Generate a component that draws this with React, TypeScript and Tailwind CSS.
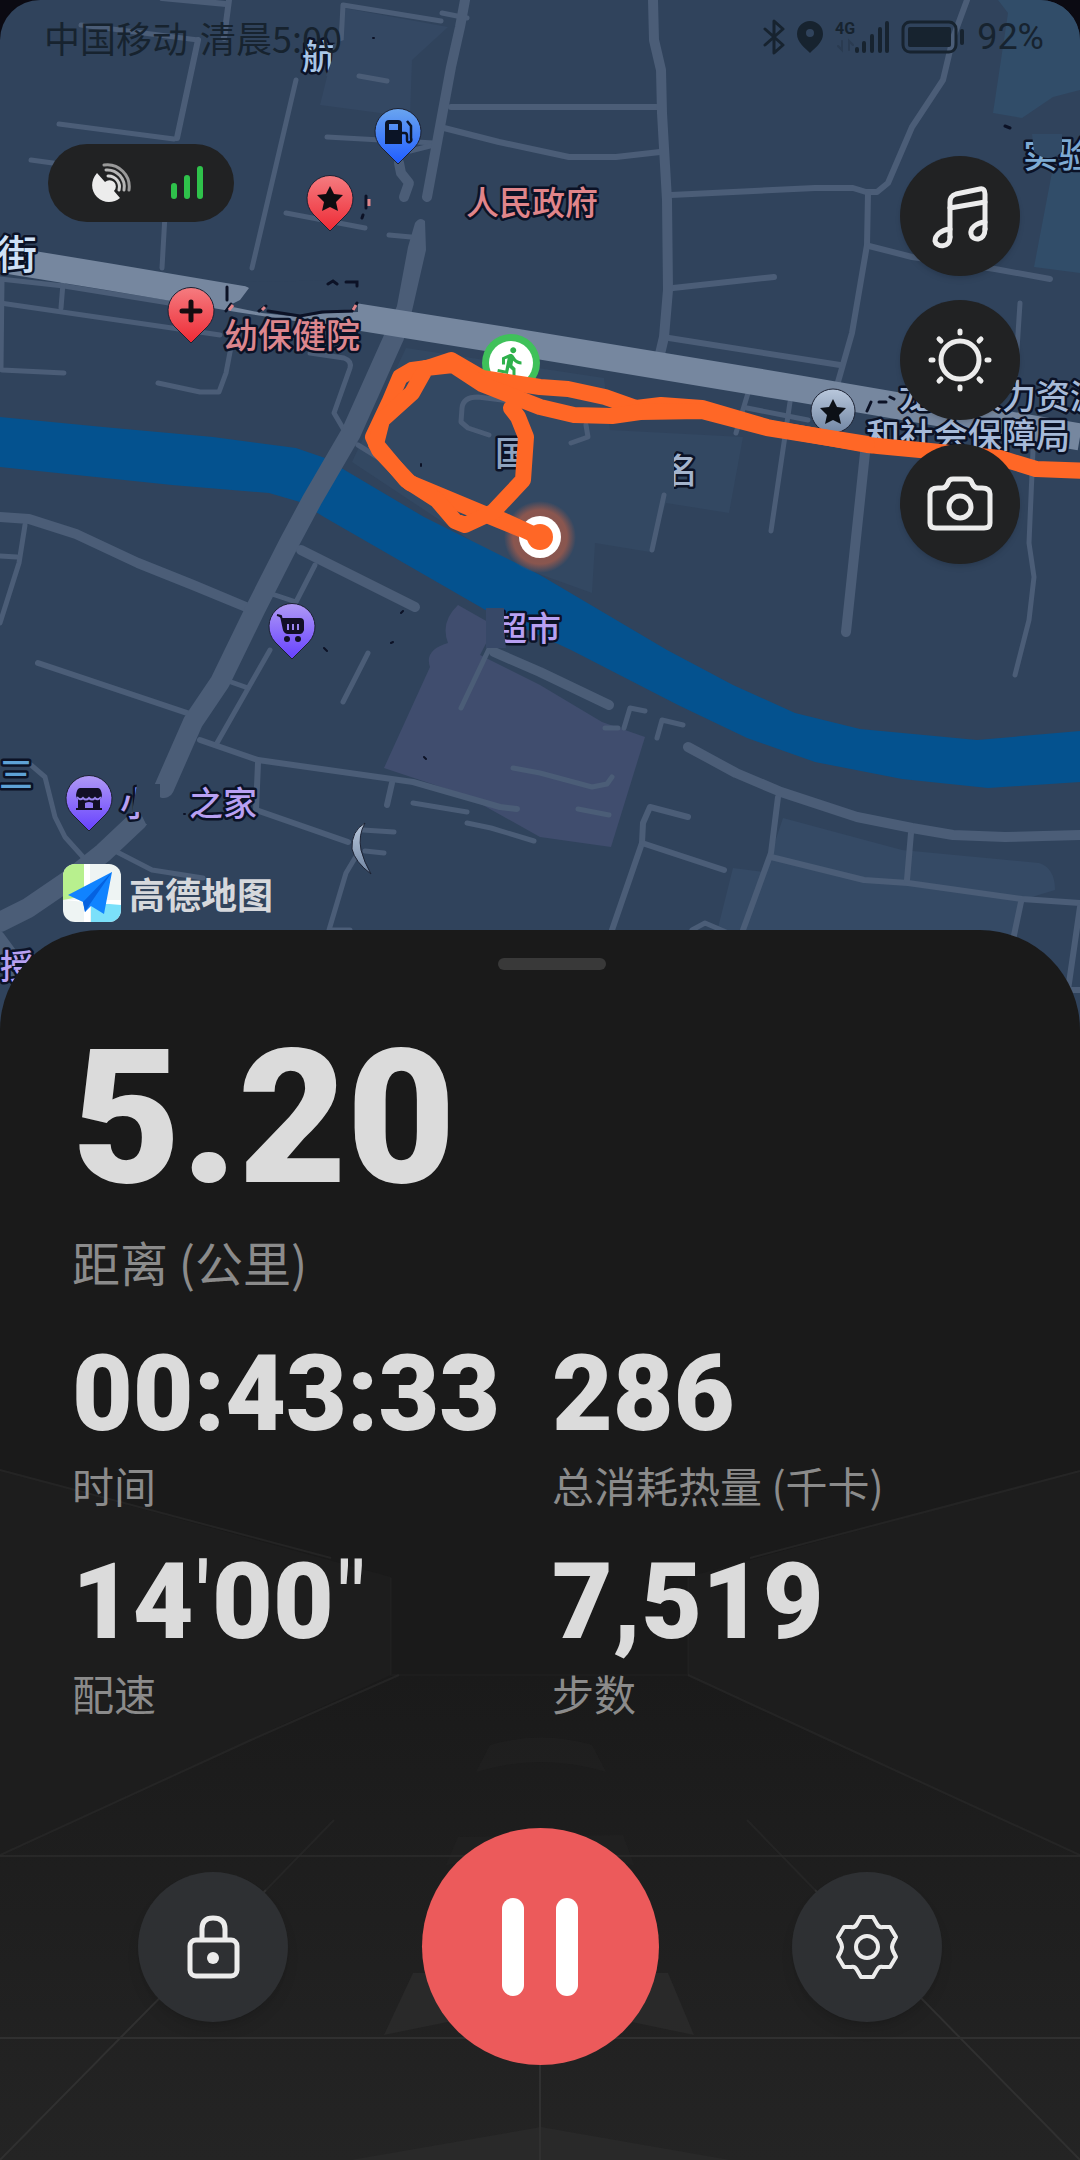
import type { ReactNode } from "react";
import { MdDirectionsRun, MdLocalGasStation, MdStore } from "react-icons/md";
import { FaShoppingCart } from "react-icons/fa";

const stats = [
  { label: "时间", value: "00:43:33" },
  { label: "总消耗热量 (千卡)", value: "286" },
  { label: "配速", value: "14'00\"" },
  { label: "步数", value: "7,519" },
];

// width -> list of polylines drawn with that stroke
const roads: { width: number; lines: string[] }[] = [
  {
    width: 5,
    lines: [
      "M81 25 L198 40", "M59 124 L174 139", "M31 160 L60 164", "M165 215 L162 268", "M296 80 L252 268",
      "M327 137 L434 143", "M286 213 L365 228", "M389 235 L411 237", "M0 279 L64 286 L169 303",
      "M0 303 L220 335", "M63 283 L61 308", "M2 280 L1 368 M2 370 L64 373",
      "M158 383 L200 392 H219 L226 373 L231 347", "M310 353 L344 358 Q352 361 350 368 L334 413 L344 430",
      "M358 445 L379 458", "M510 401 L478 397 Q463 397 462 408 L461 422 L468 428 L489 435",
      "M586 425 L588 437 L571 443", "M748 393 L736 433", "M747 408 L808 420", "M790 402 L771 531",
      "M1033 450 L1029 543 L1034 577 L1029 620 L1015 675", "M664 495 L652 550", "M1020 303 L1015 380",
      "M25 525 L19 563 L0 623", "M0 556 L17 557", "M315 565 L296 602 L275 595", "M270 650 L217 743",
      "M231 682 L248 688", "M368 653 L343 702", "M498 630 L461 708", "M413 803 L467 812", "M467 823 L491 828 L534 841",
      "M363 830 L394 832", "M365 851 L384 853", "M355 858 L346 873 L329 930 H350",
      "M31 765 L45 777 L55 817 L65 837 L83 857", "M117 852 L152 870 L203 878", "M513 768 L540 773 L592 787 L607 784 L612 777",
      "M605 728 H618", "M624 728 L630 708 L645 711", "M657 738 L662 720 L683 725", "M578 809 L609 815",
      "M692 930 L705 923 L726 932", "M341 43 L343 5 L441 21", "M442 13 L467 18", "M410 151 L434 145", "M359 76 L387 81",
    ],
  },
  {
    width: 6,
    lines: [
      "M162 -2 L226 4", "M229 0 L224 38", "M198 40 L177 138", "M451 107 H657", "M444 128 L499 142 L569 157 H616 L660 152",
      "M671 195 L815 188 H853 L866 192 H877 L888 183 L912 127 L943 80 L953 38 L967 0",
      "M868 193 L867 245 L852 333 L838 382", "M869 246 L912 257 L995 269 L1050 279", "M673 288 L774 277",
      "M669 338 L840 365", "M38 663 L193 715", "M200 740 L258 760 L413 782 L500 807 L517 809",
      "M258 763 L256 810 L348 842", "M392 783 L387 805",
      "M778 797 L771 853 L743 930", "M771 857 L864 880 L908 883 L1022 899 L1080 903", "M911 833 L907 880",
      "M1021 902 L1013 940", "M1080 907 L1068 990 L1080 990", "M688 817 L650 807 L643 823 L642 843 L612 930", "M642 843 L724 870",
    ],
  },
  {
    width: 10,
    lines: [
      "M653 0 L654 40 L661 70 L662 113 L667 200 L668 290 L664 337 L660 354", "M465 0 L460 27 L451 67 L427 197",
      "M399 163 L401 173 L409 183 L404 197", "M0 517 L29 519 L76 534 L138 563 L193 585 L246 607",
      "M301 550 L415 607", "M494 652 L540 672 L609 705", "M688 747 L736 773 L781 792 L857 817 L912 828 L953 835 L1005 837 L1080 835",
      "M865 453 L846 632",
    ],
  },
  {
    width: 20,
    lines: [
      "M399 322 L394 337 L351 433 L312 500 L289 543 L255 610 L220 682 L193 722 L164 788",
      "M138 820 L103 853 L69 880 L28 908 L0 922",
      "M-4 940 L40 1000",
    ],
  },
];

const labels = [
  { text: "街", x: -3, y: 269, size: 40, fill: "#cfe1f6" },
  { text: "航", x: 302, y: 69, size: 34, fill: "#a9c6e6" },
  { text: "人民政府", x: 466, y: 215, size: 33, fill: "#e0858a" },
  { text: "幼保健院", x: 224, y: 348, size: 34, fill: "#dc868d" },
  { text: "国", x: 495, y: 466, size: 34, fill: "#8ea3bf" },
  { text: "名", x: 664, y: 483, size: 34, fill: "#a3b3cc" },
  { text: "龙", x: 899, y: 409, size: 34, fill: "#a6bad8" },
  { text: "人力资源", x: 968, y: 409, size: 34, fill: "#a6bad8" },
  { text: "和社会保障局", x: 866, y: 448, size: 34, fill: "#a6bad8" },
  { text: "超市", x: 493, y: 641, size: 34, fill: "#b8a0f2" },
  { text: "小", x: 120, y: 816, size: 34, fill: "#b8a0f2" },
  { text: "之家", x: 189, y: 816, size: 34, fill: "#b8a0f2" },
  { text: "三", x: -1, y: 787, size: 34, fill: "#5ea2d6" },
  { text: "授", x: 0, y: 979, size: 34, fill: "#b8a0f2" },
  { text: "实验", x: 1023, y: 168, size: 35, fill: "#7daad2" },
];

const STAR = "M0 -13 L4 -5 L13 -4 L6 3 L8 12 L0 8 L-8 12 L-6 3 L-13 -4 L-4 -5 Z";

const Pin = ({ x, y, fill, children }: { x: number; y: number; fill: string; children: ReactNode }) => (
  <g transform={`translate(${x} ${y})`}>
    <path d="M0 32 L-17 15 A23 23 0 1 1 17 15 Z" fill={fill} stroke="#1c2233" strokeWidth="1" strokeLinejoin="round" />
    {children}
  </g>
);

const Gradient = ({ id, from, to }: { id: string; from: string; to: string }) => (
  <linearGradient id={id} x1="0" y1="0" x2="0" y2="1">
    <stop offset="0" stopColor={from} />
    <stop offset="1" stopColor={to} />
  </linearGradient>
);

const RouteMap = () => (
  <svg
    viewBox="0 0 1080 1040"
    preserveAspectRatio="xMidYMin slice"
    className="absolute inset-x-0 top-0 h-[1040px] w-full rounded-t-[40px] bg-[#30435c]"
    role="img"
    aria-label="高德地图"
  >
    <defs>
      <Gradient id="pin-red" from="#f57c80" to="#ee2a35" />
      <Gradient id="pin-blue" from="#6aa5f0" to="#1f5cff" />
      <Gradient id="pin-purple" from="#b09af5" to="#6640ff" />
      <Gradient id="pin-gray" from="#b9c8dc" to="#7186a3" />
      <radialGradient id="glow">
        <stop offset="0.75" stopColor="#e0643c" stopOpacity="0.5" />
        <stop offset="1" stopColor="#e0643c" stopOpacity="0" />
      </radialGradient>
    </defs>

    {/* land blocks */}
    <path d="M344 8 L448 27 L412 60 L410 117 L320 105 Z" fill="#344863" />
    <path d="M406 348 L604 378 L610 430 L743 437 L729 513 L666 503 L650 552 L595 543 L592 593 L500 560 L352 462 Z" fill="#334862" />
    <path d="M783 818 L902 850 L1039 863 Q1055 868 1055 890 L1022 900 L1012 940 H715 L733 868 L765 872 Z" fill="#354a65" />
    <path d="M998 0 L1008 13 L993 113 L1022 118 L1053 97 L1080 90 V0 Z M1053 167 H1080 V273 L1034 267 Z" fill="#314d69" />
    <path
      d="M458 605 Q440 622 448 643 Q424 650 430 667 L384 768 L465 795 L540 837 L611 847 L645 737 L602 722 L540 685 L480 655 L495 626 Z"
      fill="#404d6e"
    />

    <path
      d="M0 417 L103 427 L213 437 L296 448 L325 458 L348 472 L424 517 L540 575 L667 650 L733 685 L795 713 L860 729 L977 740 L1080 731 V782 L988 788 L902 779 L815 762 L747 738 L678 705 L571 650 L489 612 L324 517 L300 502 L269 493 L172 485 L0 467 Z"
      fill="#04528f"
    />

    {roads.map((group) => (
      <g key={group.width} fill="none" stroke="#4b5d77" strokeWidth={group.width} strokeLinejoin="round" strokeLinecap="round">
        {group.lines.map((d) => (
          <path key={d} d={d} />
        ))}
      </g>
    ))}
    <path d="M415 223 Q420 216 425 221 L426 250 L409 324 H389 L397 306 L408 247 Z" fill="#4b5d77" />

    <path d="M0 259 L110 277 L240 299 L358 317 L540 346 L800 389 L1080 437" fill="none" stroke="#76879f" strokeWidth="27" />
    <path d="M238 282 L249 288 L240 300 L228 306 L262 313 L300 317 L325 313 L358 312 V280 Z" fill="#30435c" />
    <g stroke="#0c1226" strokeWidth="3" fill="none" strokeLinecap="round">
      <path d="M227 287 V300 M226 311 L231 304 M259 311 L266 306 M328 284 L333 281 L337 284 M346 282 H357 V286 M268 311 L300 316 L322 312 L352 311 L357 303" />
      <path d="M366 196 V208 M363 215 L362 218 M1005 126 L1010 128 M867 411 L871 402 M879 402 H886 M890 397 L894 399" />
      <path d="M324 648 L327 651 M391 643 L393 642 M401 613 L403 611 M424 757 L426 759 M421 464 V466 M373 38 H374 M184 814 H185" strokeWidth="2" />
    </g>
    <path d="M229 310 L233 305 M262 310 L265 307 M369 199 V206 M353 310 L356 305" stroke="#e0858a" strokeWidth="3" />

    {/* start marker sits below the track */}
    <path d="M486 378 L508 403 L536 378 Z" fill="#3fc15a" />
    <circle cx="511" cy="363" r="29" fill="#3fc15a" />
    <circle cx="511" cy="363" r="22" fill="#fff" />
    <MdDirectionsRun x={493} y={345} size={36} color="#2fb14c" />

    <circle cx="833" cy="411" r="22" fill="url(#pin-gray)" stroke="#1c2233" />
    <path d={STAR} transform="translate(833 412)" fill="#0c1016" />

    <g
      fontFamily="'Noto Sans CJK SC', sans-serif"
      fontWeight="500"
      stroke="#0b1226"
      strokeWidth="5"
      strokeLinejoin="round"
      paintOrder="stroke"
    >
      {labels.map((l) => (
        <text key={l.text} x={l.x} y={l.y} fontSize={l.size} fill={l.fill}>
          {l.text}
        </text>
      ))}
    </g>

    {/* worn-off parts of labels */}
    <path d="M333 44 L344 40 V76 H326 L332 60 Z" fill="#344863" />
    <path d="M660 450 H674 V490 H660 Z" fill="#334862" />
    <path d="M486 608 H504 V632 L506 648 H486 Z" fill="#374867" />
    <path d="M137 784 H160 V824 H146 L140 812 L132 812 Z" fill="#30435c" />
    <path d="M1032 134 H1062 V152 Q1048 164 1034 152 Z" fill="#314a66" />

    <g fill="none" stroke="#ff6726" strokeWidth="16" strokeLinejoin="round" strokeLinecap="round">
      <path d="M540 537 L499 520 L482 513 L410 483 L379 450 L373 437 L389 403 L400 377 L412 370 L427 368 L451 360 L482 378 L540 387 L568 389 L605 397 L636 408 L661 405 L702 408 L767 427 L867 445 L920 450 L1000 458 L1036 469 L1090 471" />
      <path d="M511 408 L518 417 L526 437 L523 480 L493 512 L465 525 L455 521 L437 500 L406 480 L376 444 L382 420 L412 393 L426 368 L453 365 L482 384 L517 398 L540 407 L574 415 L612 416 L640 412 L702 411 L767 428 L867 444" />
    </g>
    <circle cx="540" cy="537" r="36" fill="url(#glow)" />
    <circle cx="540" cy="537" r="21" fill="#fff" />
    <path d="M500 519 L535 535" stroke="#ff6726" strokeWidth="16" />
    <circle cx="540" cy="537" r="13" fill="#ff6726" />

    <Pin x={398} y={132} fill="url(#pin-blue)">
      <path
        d="M-13 12 V-8 Q-13 -12 -9 -12 H0 Q4 -12 4 -8 V12 Z M-9 -8 V-2 H0 V-8 Z"
        fill="#0b1426"
        fillRule="evenodd"
      />
      <path d="M4 1 H7 Q9 1 9 4 V8 Q9 11 12 10 Q14 9 13 6 V-6 L9 -11" fill="none" stroke="#0b1426" strokeWidth="2.5" />
    </Pin>
    <Pin x={330} y={199} fill="url(#pin-red)">
      <path d={STAR} fill="#100c10" />
    </Pin>
    <Pin x={191} y={311} fill="url(#pin-red)">
      <path d="M0 -9 V9 M-9 0 H9" stroke="#150c10" strokeWidth="5" strokeLinecap="round" />
    </Pin>
    <Pin x={292} y={627} fill="url(#pin-purple)">
      <path d="M-15 -12 L-11 -11 L-8 3 Q-7 6 -4 6 H8 Q10 6 11 3 V-5 Q11 -8 8 -8 H-10" fill="#120f26" stroke="#120f26" strokeWidth="2" strokeLinejoin="round" />
      <path d="M-4 -3 V3 M1 -3 V3 M6 -3 V3" stroke="#9a85f0" strokeWidth="2" />
      <circle cx="-5" cy="12" r="3" fill="#120f26" />
      <circle cx="6" cy="12" r="3" fill="#120f26" />
    </Pin>
    <Pin x={89} y={799} fill="url(#pin-purple)">
      <path d="M-9 -11 H9 Q12 -11 13 -4 Q13 -1 11 0 V9 H13 V11 H-13 V9 H-11 V0 Q-13 -1 -13 -4 Q-12 -11 -9 -11 Z" fill="#120f26" />
      <path d="M-12 -2 Q-9 2 -6 -1 Q-3 2 0 -1 Q3 2 6 -1 Q9 2 12 -2" fill="none" stroke="#9a85f0" strokeWidth="2" />
      <path d="M-4 9 V4 Q0 2 4 4 V9 Z" fill="#8f78f4" />
    </Pin>

    <path d="M365 823 Q351 831 352 849 Q355 862 371 874 Q364 862 361 850 Q358 835 365 823 Z" fill="url(#pin-gray)" stroke="#1c2233" />
  </svg>
);

const StatusBar = () => (
  <header className="flex h-[74px] items-center justify-between pl-11 pr-9 text-[36px] leading-none text-[#17232f]">
    <div className="flex gap-3">
      <span>中国移动</span>
      <span>清晨5:00</span>
    </div>
    <div className="flex items-center gap-3">
      <svg viewBox="0 0 22 36" className="h-9 w-[22px]" fill="none" stroke="currentColor" strokeWidth="3" strokeLinejoin="round" strokeLinecap="round">
        <path d="M2 10 L20 26 L11 34 V2 L20 10 L2 26" />
      </svg>
      <svg viewBox="0 0 26 32" className="h-8 w-[26px]" fill="currentColor" fillRule="evenodd">
        <path d="M13 0 A13 13 0 0 0 0 13 C0 21 8 27 13 32 C18 27 26 21 26 13 A13 13 0 0 0 13 0 Z M13 8 A4 4 0 1 1 13 16 A4 4 0 1 1 13 8 Z" />
      </svg>
      <div className="flex h-8">
        <span className="font-[Roboto] text-base font-bold leading-none">4G</span>
        <svg viewBox="0 0 34 32" className="h-8 w-[34px] overflow-visible" stroke="currentColor" strokeWidth="4" strokeLinecap="round">
          <path d="M2 28 V30 M9 22 V30 M17 15 V30 M25 8 V30 M32 2 V30" />
          <path d="M-13 20 V29 L-17 25 M-6 29 V20 L-2 24" fill="none" opacity="0.25" strokeWidth="2" />
        </svg>
      </div>
      <svg viewBox="0 0 64 34" className="h-[34px] w-16" fill="none" stroke="currentColor" strokeWidth="3">
        <rect x="2" y="2" width="53" height="30" rx="7" />
        <rect x="7" y="7" width="43" height="20" rx="2" fill="currentColor" stroke="none" />
        <path d="M61 11 V23" strokeWidth="4" strokeLinecap="round" />
      </svg>
      <span className="font-[Roboto]">92%</span>
    </div>
  </header>
);

const MapButton = ({ label, children }: { label: string; children: ReactNode }) => (
  <button type="button" aria-label={label} className="flex size-[120px] items-center justify-center rounded-full bg-[#212223] shadow-md">
    <svg viewBox="0 0 72 72" className="size-[72px]" fill="none" stroke="#ececec" strokeWidth="5" strokeLinecap="round" strokeLinejoin="round">
      {children}
    </svg>
  </button>
);

const RoomBackdrop = () => (
  <svg viewBox="0 0 1080 1230" preserveAspectRatio="xMidYMax slice" className="absolute inset-0 size-full" fill="none" aria-hidden="true">
    <defs>
      <Gradient id="floor" from="#1a1a1a" to="#242424" />
    </defs>
    <path d="M0 540 L391 647 V745 L0 925 Z M1080 540 L688 647 V745 L1080 925 Z" fill="#1d1d1d" />
    <path d="M391 745 H688 L1080 925 V1230 H0 V925 Z" fill="url(#floor)" />
    <g fill="#292929">
      <path d="M541 1197 L730 1230 H351 Z" />
      <path d="M413 1043 H668 L694 1105 L541 1073 L384 1105 Z" />
      <path d="M458 907 L623 905 L634 935 L541 920 L446 935 Z" opacity="0.3" />
      <path d="M490 815 Q541 800 592 815 L606 842 Q541 822 476 842 Z" opacity="0.3" />
    </g>
    <g stroke="#2c2c2c" strokeWidth="2">
      <path d="M0 540 L331 628 M1080 541 L750 628 M0 925 L251 810 L399 745 M1080 925 L829 810 L688 745" opacity="0.6" />
      <path d="M391 648 V745 H688 V648" opacity="0.2" />
      <path d="M0 926 H1080" opacity="0.7" />
      <path d="M334 890 L266 960 M747 890 L815 960" opacity="0.5" />
      <path d="M0 1108 H1080 M540 1135 V1230 M266 960 L0 1230 M815 960 L1080 1230" stroke="#303030" />
    </g>
  </svg>
);

const Amount = ({ value }: { value: string }) => (
  <>
    {value.split(/(['"])/).map((part, i) =>
      part === "'" || part === '"' ? (
        <span key={i} className="font-normal">{part}</span>
      ) : (
        part
      ),
    )}
  </>
);

export default function App() {
  return (
    <div className="relative flex min-h-screen flex-col overflow-hidden bg-[#0b0a12] font-['Noto_Sans_CJK_SC',sans-serif]">
      <RouteMap />

      <div className="relative">
        <StatusBar />

        <div className="flex items-start justify-between pl-12 pr-[60px] pt-[70px]">
          <div className="flex h-[78px] w-[186px] items-center justify-between rounded-full bg-[#212223] pl-[43px] pr-[31px]">
            <svg viewBox="0 0 40 40" className="size-10" fill="none" strokeWidth="3" strokeLinecap="round">
              <path d="M6 10 C-1 18 0 28 6 34 C13 41 23 40 29 35 L23 28 A6 6 0 0 0 14 19 Z" fill="#ececec" />
              <path d="M17 13 A11 11 0 0 1 28 27" stroke="#d5d5d5" />
              <path d="M15 7 A17 17 0 0 1 33 27" stroke="#b5b5b5" />
              <path d="M13 2 A22 22 0 0 1 38 27" stroke="#999999" />
            </svg>
            <svg viewBox="0 0 34 36" className="h-9 w-[34px]" stroke="#2fc24b" strokeWidth="6" strokeLinecap="round">
              <path d="M5 21 V31 M18 13 V31 M31 4 V31" />
            </svg>
          </div>

          <div className="mt-3 flex flex-col gap-6">
            <MapButton label="音乐">
              <path d="M26 57 V22 Q26 16 32 14 L56 9 Q61 8 61 14 V49" />
              <path d="M26 28 L61 22" />
              <path d="M26 49 C17 50 11 55 11 61 C12 67 26 69 26 57" />
              <path d="M61 42 C52 43 46 48 47 54 C48 61 61 62 61 49" />
            </MapButton>
            <MapButton label="亮度">
              <circle cx="36" cy="36" r="19" />
              <path d="M36 7 V9 M36 63 V65 M7 36 H9 M63 36 H65 M15 15 L17 17 M55 55 L57 57 M15 57 L17 55 M55 17 L57 15" />
            </MapButton>
            <MapButton label="相机">
              <path d="M14 20 H18 Q22 20 24 15 Q25 11 29 11 H43 Q47 11 48 15 Q50 20 54 20 H58 Q66 20 66 26 V55 Q66 60 60 60 H12 Q6 60 6 55 V26 Q6 20 14 20 Z" />
              <circle cx="36" cy="39" r="11" />
            </MapButton>
          </div>
        </div>

        <div className="flex items-center gap-2 pl-[63px] pt-[300px]">
          <svg viewBox="0 0 58 58" className="size-[58px] rounded-xl">
            <rect width="58" height="58" fill="#eef4f3" />
            <path d="M0 0 H21 V32 L0 36 Z" fill="#b8f08e" />
            <path d="M28 42 L58 38 V58 H28 Z" fill="#7be0fa" />
            <path d="M21 0 H27 V58 H21 Z M0 36 L58 41 V36 Z" fill="#fff" />
            <path d="M5 31 L49 8 L41 50 L28 42 L22 48 L20 38 Z" fill="#1083ff" />
            <path d="M49 8 L20 38 L22 48 L27 40 Z" fill="#0562e0" />
          </svg>
          <span className="text-[36px] font-bold leading-none text-[#d6d8dc]">高德地图</span>
        </div>
      </div>

      <main className="relative mt-2 flex grow flex-col overflow-hidden rounded-t-[100px] bg-[#1a1a1a] px-[72px] pt-7">
        <RoomBackdrop />

        <div className="relative flex justify-center pl-6">
          <div className="h-3 w-[108px] rounded-full bg-[#393939]" />
        </div>

        <div className="relative mt-[54px] flex flex-col">
          <strong className="font-[Roboto] text-[188px] font-black leading-none text-[#dbdbdb]">5.20</strong>
          <span className="mt-[25px] text-[48px] leading-none text-[#8b8b8b]">距离 (公里)</span>
        </div>

        <dl className="relative mt-[57px] grid grid-cols-2 gap-x-6 gap-y-11">
          {stats.map((s) => (
            <div key={s.label} className="flex flex-col-reverse justify-end gap-[17px]">
              <dt className="whitespace-nowrap text-[42px] leading-none text-[#8b8b8b]">{s.label}</dt>
              <dd className="font-[Roboto] text-[105px] font-black leading-none text-[#dbdbdb]">
                <Amount value={s.value} />
              </dd>
            </div>
          ))}
        </dl>

        <div className="relative mt-[114px] flex items-center justify-between px-[66px] pb-[92px]">
          <button type="button" aria-label="锁定" className="flex size-[150px] items-center justify-center rounded-full bg-[#2e3033] shadow-lg">
            <svg viewBox="0 0 64 64" className="size-16" fill="none" stroke="#ececec" strokeWidth="5">
              <rect x="9" y="25" width="47" height="36" rx="6" />
              <path d="M21 25 V14 Q21 3 32 3 Q44 3 44 14 V25" />
              <circle cx="32" cy="43" r="6" fill="#ececec" stroke="none" />
            </svg>
          </button>
          <button type="button" aria-label="暂停" className="flex size-[237px] items-center justify-center gap-8 rounded-full bg-[#ec5a5b]">
            <span className="h-[98px] w-[22px] rounded-full bg-white" />
            <span className="h-[98px] w-[22px] rounded-full bg-white" />
          </button>
          <button type="button" aria-label="设置" className="flex size-[150px] items-center justify-center rounded-full bg-[#2e3033] shadow-lg">
            <svg viewBox="-34 -34 68 68" className="size-[68px]" fill="none" stroke="#ececec" strokeWidth="4" strokeLinejoin="round">
              <path d="M-6 -30 H6 L10 -23 Q12 -19 16 -20 L23 -20 L29 -10 L26 -4 Q24 0 26 4 L29 10 L23 20 L16 20 Q12 19 10 23 L6 30 H-6 L-10 23 Q-12 19 -16 20 L-23 20 L-29 10 L-26 4 Q-24 0 -26 -4 L-29 -10 L-23 -20 L-16 -20 Q-12 -19 -10 -23 Z" />
              <circle r="11" />
            </svg>
          </button>
        </div>
      </main>
    </div>
  );
}
